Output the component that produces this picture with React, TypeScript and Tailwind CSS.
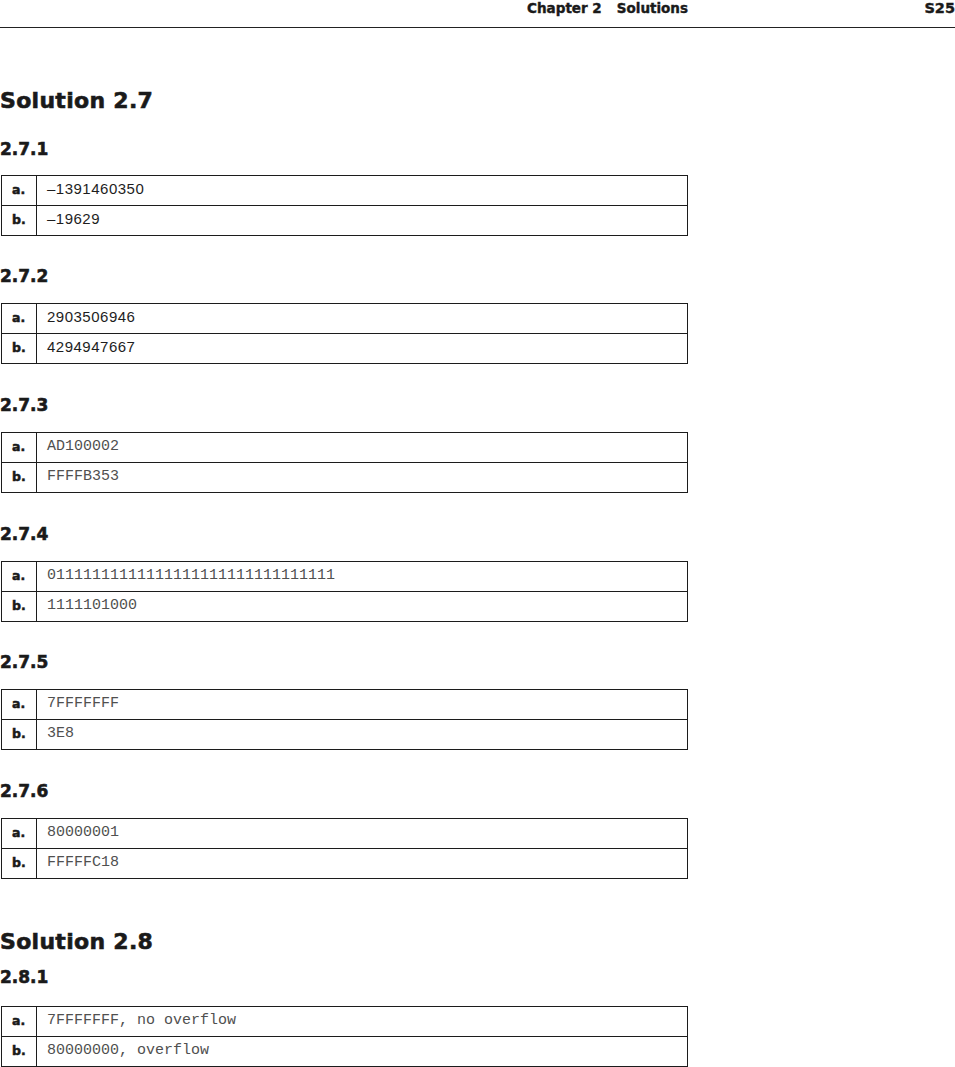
import React from "react";

type Row = { label: string; value: string; mono?: boolean };

const head = { fontFamily: '"DejaVu Sans", "Liberation Sans", sans-serif' };
const sans = { fontFamily: '"Liberation Sans", Arial, sans-serif' };
const mono = { fontFamily: '"Liberation Mono", "Courier New", monospace' };

function Table({ rows, className = "" }: { rows: Row[]; className?: string }) {
  return (
    <div className={`w-[687px] ml-[1px] border border-[#1c1c1c] ${className}`}>
      {rows.map((r, i) => (
        <div
          key={r.label}
          className={`flex h-[29px] ${i < rows.length - 1 ? "border-b border-[#1c1c1c]" : ""} box-content`}
        >
          <div
            className="w-[35px] shrink-0 border-r border-[#1c1c1c] flex items-center pl-[10px] text-[12.5px] font-bold text-[#1a1a1a] [-webkit-text-stroke:0.5px_#1a1a1a]"
            style={head}
          >
            {r.label}
          </div>
          {r.mono ? (
            <div className="flex items-center pl-[10px] text-[15px] text-[#505050]" style={mono}>
              {r.value}
            </div>
          ) : (
            <div
              className="flex items-center pl-[10px] pb-[3px] text-[15px] tracking-[0.5px] text-[#1e1e1e]"
              style={sans}
            >
              {r.value}
            </div>
          )}
        </div>
      ))}
    </div>
  );
}

function Sub({ children, className = "" }: { children: React.ReactNode; className?: string }) {
  return (
    <div
      className={`text-[17px] leading-[20px] font-bold text-[#1a1a1a] [-webkit-text-stroke:0.6px_#1a1a1a] ${className}`}
      style={head}
    >
      {children}
    </div>
  );
}

function Big({ children, className = "" }: { children: React.ReactNode; className?: string }) {
  return (
    <div
      className={`text-[22px] leading-[26px] font-bold text-[#1a1a1a] tracking-[0.3px] [-webkit-text-stroke:0.6px_#1a1a1a] ${className}`}
      style={head}
    >
      {children}
    </div>
  );
}

export default function App() {
  return (
    <div className="w-[955px] h-[1067px] bg-white overflow-hidden flex flex-col">
      <div className="h-[28px] border-b border-[#222] flex shrink-0">
        <div
          className="w-[688px] text-right text-[13.5px] leading-[16px] font-bold text-[#1a1a1a] [-webkit-text-stroke:0.4px_#1a1a1a]"
          style={head}
        >
          <span>Chapter 2</span>
          <span className="ml-[15px]">Solutions</span>
        </div>
        <div
          className="flex-1 text-right text-[14.5px] leading-[16px] font-bold text-[#1a1a1a] [-webkit-text-stroke:0.4px_#1a1a1a]"
          style={head}
        >
          S25
        </div>
      </div>

      <Big className="mt-[60px]">Solution 2.7</Big>

      <Sub className="mt-[25px]">2.7.1</Sub>
      <Table
        className="mt-[16px]"
        rows={[
          { label: "a.", value: "\u20131391460350" },
          { label: "b.", value: "\u201319629" },
        ]}
      />

      <Sub className="mt-[30px]">2.7.2</Sub>
      <Table
        className="mt-[17px]"
        rows={[
          { label: "a.", value: "2903506946" },
          { label: "b.", value: "4294947667" },
        ]}
      />

      <Sub className="mt-[31px]">2.7.3</Sub>
      <Table
        className="mt-[17px]"
        rows={[
          { label: "a.", value: "AD100002", mono: true },
          { label: "b.", value: "FFFFB353", mono: true },
        ]}
      />

      <Sub className="mt-[31px]">2.7.4</Sub>
      <Table
        className="mt-[17px]"
        rows={[
          { label: "a.", value: "01111111111111111111111111111111", mono: true },
          { label: "b.", value: "1111101000", mono: true },
        ]}
      />

      <Sub className="mt-[30px]">2.7.5</Sub>
      <Table
        className="mt-[17px]"
        rows={[
          { label: "a.", value: "7FFFFFFF", mono: true },
          { label: "b.", value: "3E8", mono: true },
        ]}
      />

      <Sub className="mt-[31px]">2.7.6</Sub>
      <Table
        className="mt-[17px]"
        rows={[
          { label: "a.", value: "80000001", mono: true },
          { label: "b.", value: "FFFFFC18", mono: true },
        ]}
      />

      <Big className="mt-[50px]">Solution 2.8</Big>

      <Sub className="mt-[12px]">2.8.1</Sub>
      <Table
        className="mt-[19px]"
        rows={[
          { label: "a.", value: "7FFFFFFF, no overflow", mono: true },
          { label: "b.", value: "80000000, overflow", mono: true },
        ]}
      />
    </div>
  );
}
